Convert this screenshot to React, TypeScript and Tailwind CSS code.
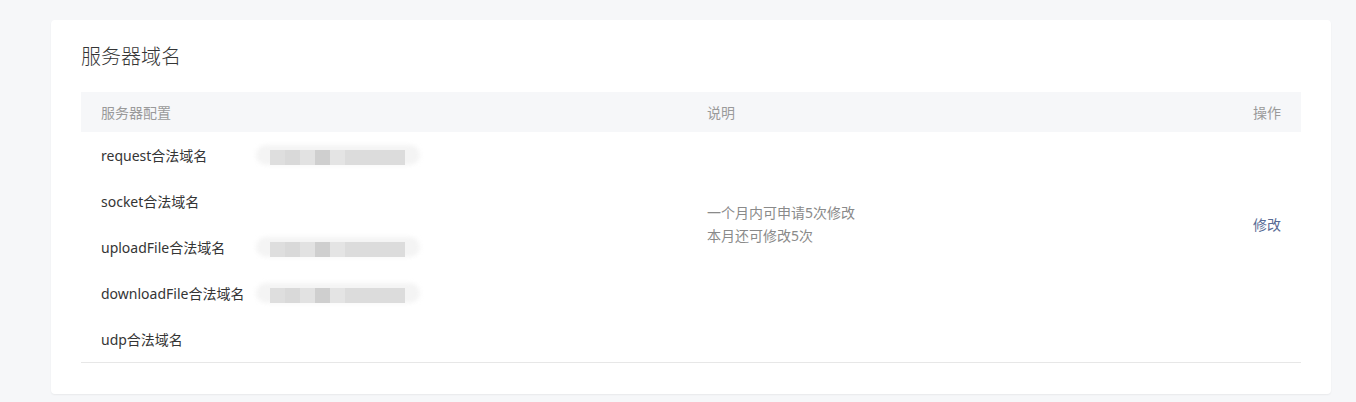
const domainRows = [
  { name: "request合法域名", masked: true },
  { name: "socket合法域名", masked: false },
  { name: "uploadFile合法域名", masked: true },
  { name: "downloadFile合法域名", masked: true },
  { name: "udp合法域名", masked: false },
];

// pixelated / blurred placeholder for hidden domains
function MaskedValue() {
  return (
    <div className="relative h-[22px] w-[164px]">
      <div className="absolute left-0 top-[1px] h-[20px] w-[164px] rounded-full bg-[#f4f4f4] blur-[2px]" />
      <div className="absolute left-[14px] top-[6px] flex h-[15px] blur-[0.6px]">
        <div className="w-[15px] bg-[#dedede]" />
        <div className="w-[15px] bg-[#d9d9d9]" />
        <div className="w-[15px] bg-[#e2e2e2]" />
        <div className="w-[15px] bg-[#cfcfcf]" />
        <div className="w-[15px] bg-[#e4e4e4]" />
        <div className="w-[60px] bg-[#dcdcdc]" />
      </div>
    </div>
  );
}

export default function App() {
  return (
    <div
      className="min-h-[402px] bg-[#f6f7f9] pl-[51px] pr-[25px] pt-[20px] pb-[9px]"
      style={{ fontFamily: '"Noto Sans", "Noto Sans CJK SC", sans-serif' }}
    >
      <div className="rounded-[4px] bg-white px-[30px] pt-[23px] pb-[31px] shadow-[0_1px_2px_rgba(0,0,0,0.06)]">
        {/* Title */}
        <h2 className="text-[20px] font-light leading-[28px] text-[#353535]">服务器域名</h2>

        {/* Table */}
        <div className="mt-[21px]">
          <div className="grid h-[40px] grid-cols-[606px_1fr_auto] items-center bg-[#f6f7f9] text-[14px] text-[#9a9a9a]">
            <div className="pl-[20px]">服务器配置</div>
            <div className="pl-[20px]">说明</div>
            <div className="pr-[20px] text-right">操作</div>
          </div>

          <div className="grid grid-cols-[606px_1fr_auto] border-b border-[#e7e7e7] text-[14px]">
            <div className="flex flex-col">
              {domainRows.map((row) => (
                <div key={row.name} className="flex h-[46px] items-center pl-[20px] text-[#353535]">
                  <span className="w-[155px] shrink-0">{row.name}</span>
                  {row.masked && <MaskedValue />}
                </div>
              ))}
            </div>

            <div className="pl-[20px] pt-[69px] leading-[23px] text-[#8a8a8a]">
              <div>一个月内可申请5次修改</div>
              <div>本月还可修改5次</div>
            </div>

            <div className="pr-[20px] pt-[81px] leading-[23px]">
              <a className="cursor-pointer text-[#576b95]">修改</a>
            </div>
          </div>
        </div>
      </div>
    </div>
  );
}
